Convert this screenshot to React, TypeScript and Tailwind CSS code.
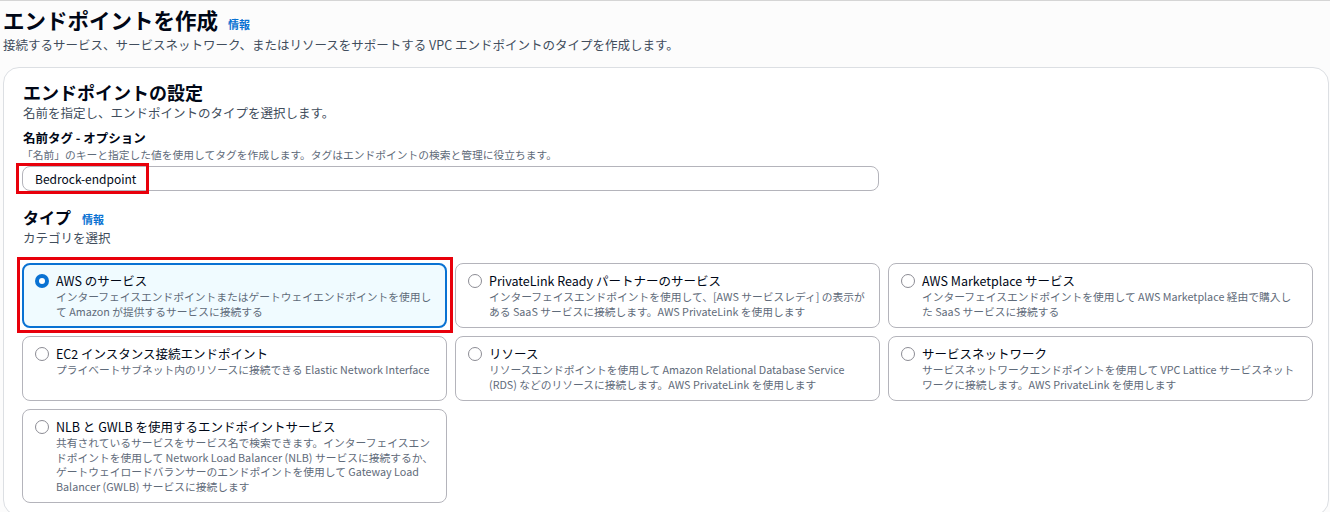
import React from "react";

type Option = {
  id: string;
  title: string;
  lines: string[];
  selected?: boolean;
};

const options: Option[] = [
  {
    id: "aws",
    title: "AWS のサービス",
    lines: [
      "インターフェイスエンドポイントまたはゲートウェイエンドポイントを使用し",
      "て Amazon が提供するサービスに接続する",
    ],
    selected: true,
  },
  {
    id: "partner",
    title: "PrivateLink Ready パートナーのサービス",
    lines: [
      "インターフェイスエンドポイントを使用して、[AWS サービスレディ] の表示が",
      "ある SaaS サービスに接続します。AWS PrivateLink を使用します",
    ],
  },
  {
    id: "marketplace",
    title: "AWS Marketplace サービス",
    lines: [
      "インターフェイスエンドポイントを使用して AWS Marketplace 経由で購入し",
      "た SaaS サービスに接続する",
    ],
  },
  {
    id: "ec2",
    title: "EC2 インスタンス接続エンドポイント",
    lines: ["プライベートサブネット内のリソースに接続できる Elastic Network Interface"],
  },
  {
    id: "resource",
    title: "リソース",
    lines: [
      "リソースエンドポイントを使用して Amazon Relational Database Service",
      "(RDS) などのリソースに接続します。AWS PrivateLink を使用します",
    ],
  },
  {
    id: "network",
    title: "サービスネットワーク",
    lines: [
      "サービスネットワークエンドポイントを使用して VPC Lattice サービスネット",
      "ワークに接続します。AWS PrivateLink を使用します",
    ],
  },
  {
    id: "nlb",
    title: "NLB と GWLB を使用するエンドポイントサービス",
    lines: [
      "共有されているサービスをサービス名で検索できます。インターフェイスエン",
      "ドポイントを使用して Network Load Balancer (NLB) サービスに接続するか、",
      "ゲートウェイロードバランサーのエンドポイントを使用して Gateway Load",
      "Balancer (GWLB) サービスに接続します",
    ],
  },
];

function Radio({ checked }: { checked?: boolean }) {
  if (checked) {
    return (
      <span className="mt-[2px] flex h-[14px] w-[14px] shrink-0 items-center justify-center rounded-full bg-[#0972d3]">
        <span className="h-[6px] w-[6px] rounded-full bg-white" />
      </span>
    );
  }
  return <span className="mt-[2px] h-[14px] w-[14px] shrink-0 rounded-full border-[1.5px] border-[#8c8c94] bg-white" />;
}

function Tile({ option }: { option: Option }) {
  const box = option.selected
    ? "border-2 border-[#0972d3] bg-[#f0fbff] px-[11px] pt-[7px] pb-[7px]"
    : "border border-[#b4b4bb] bg-white px-[12px] pt-[8px] pb-[8px]";
  return (
    <div className="relative">
      <div className={`flex h-full gap-[7px] rounded-[8px] ${box}`}>
        <Radio checked={option.selected} />
        <div>
          <div className="text-[12.5px] leading-[18px] text-[#000716]">{option.title}</div>
          <div className="text-[10.75px] leading-[14.5px] text-[#5f6b7a]">
            {option.lines.map((l) => (
              <div key={l} className="whitespace-nowrap">
                {l}
              </div>
            ))}
          </div>
        </div>
      </div>
      {option.selected && (
        <div className="pointer-events-none absolute -left-[5px] -top-[6px] h-[76px] w-[436px] border-[3px] border-[#e8000b]" />
      )}
    </div>
  );
}

export default function App() {
  return (
    <div
      className="min-h-[512px] overflow-hidden border-t border-[#d5d5d5] bg-[#fcfcfc] pl-[3px]"
      style={{ fontFamily: '"Noto Sans CJK JP", "Noto Sans", sans-serif' }}
    >
      <div className="flex items-baseline gap-[10px] pt-[4px]">
        <h1 className="text-[21.5px] font-bold leading-[30px] text-[#000716]">エンドポイントを作成</h1>
        <a className="text-[11px] font-bold text-[#0972d3]">情報</a>
      </div>
      <p className="text-[12.5px] leading-[20px] text-[#414d5c]">
        接続するサービス、サービスネットワーク、またはリソースをサポートする VPC エンドポイントのタイプを作成します。
      </p>

      <div className="mt-[12px] mr-[1px] rounded-[16px] border border-[#dcdfe3] bg-white pr-[18px] pl-[17px] pt-[12px] pb-[12px]">
        <h2 className="pl-[2px] text-[18px] font-bold leading-[24px] text-[#000716]">エンドポイントの設定</h2>
        <p className="pl-[2px] text-[12.5px] leading-[17px] text-[#414d5c]">名前を指定し、エンドポイントのタイプを選択します。</p>

        <div className="mt-[8px] pl-[2px] text-[12.5px] font-bold leading-[18px] text-[#000716]">名前タグ - オプション</div>
        <div className="pl-[1px] text-[10.75px] leading-[16px] text-[#5f6b7a]">
          「名前」のキーと指定した値を使用してタグを作成します。タグはエンドポイントの検索と管理に役立ちます。
        </div>

        <div className="relative mt-[3px] ml-[1px] w-[857px]">
          <div className="flex h-[25px] items-center rounded-[8px] border border-[#b4b4bb] bg-white pl-[12px] text-[12px] text-[#000716]">
            Bedrock-endpoint
          </div>
          <div className="pointer-events-none absolute -left-[6px] -top-[3px] h-[31px] w-[133px] border-[3px] border-[#e8000b]" />
        </div>

        <div className="mt-[15px] flex items-baseline gap-[11px] pl-[2px]">
          <h3 className="text-[16px] font-bold leading-[22px] text-[#000716]">タイプ</h3>
          <a className="text-[11px] font-bold text-[#0972d3]">情報</a>
        </div>
        <p className="pl-[2px] text-[12.5px] leading-[19px] text-[#414d5c]">カテゴリを選択</p>

        <div className="mt-[16px] ml-[1px] grid grid-cols-[425px_425px_425px] gap-[8px]">
          {options.map((o) => (
            <Tile key={o.id} option={o} />
          ))}
        </div>
      </div>
    </div>
  );
}
